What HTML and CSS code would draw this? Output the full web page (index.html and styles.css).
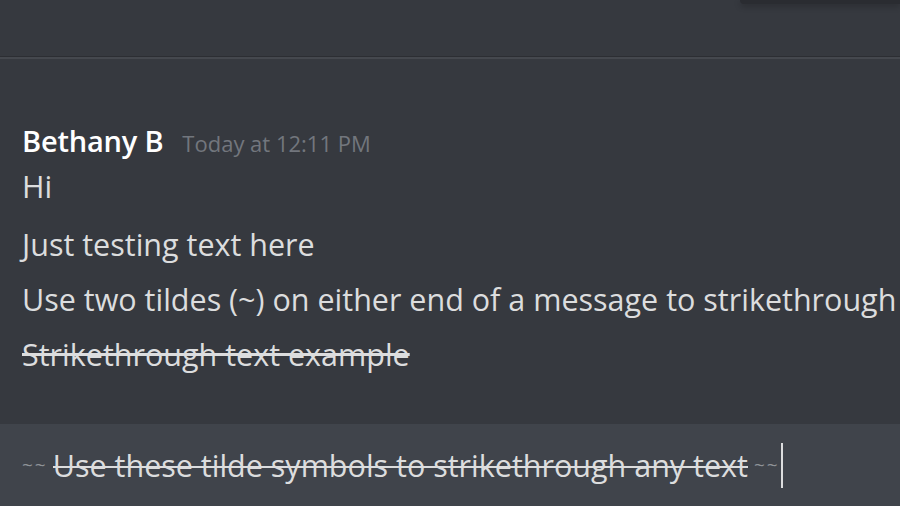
FILE: index.html
```html
<!DOCTYPE html>
<html lang="en">
<head>
    <meta charset="UTF-8">
    <meta name="viewport" content="width=device-width, initial-scale=1.0">
    <title>Chat</title>
    <link rel="stylesheet" href="styles.css">
</head>
<body>
    <div class="topbar">
        <div class="popup"></div>
    </div>
    <div class="divider"></div>

    <div class="messages">
        <div class="message">
            <div class="header">
                <span class="username">Bethany B</span>
                <span class="timestamp">Today at 12:11 PM</span>
            </div>
            <div class="line first">Hi</div>
            <div class="line">Just testing text here</div>
            <div class="line">Use two tildes (~) on either end of a message to strikethrough</div>
            <div class="line"><s>Strikethrough text example</s></div>
        </div>
    </div>

    <div class="composer">
        <span class="tilde">~~</span><s class="draft">Use these tilde symbols to strikethrough any text</s><span class="tilde end">~~</span><span class="caret"></span>
    </div>
</body>
</html>
```

FILE: styles.css
```css
body {
    margin: 0;
    height: 506px;
    overflow: hidden;
    background-color: #36393f;
    font-family: "Open Sans", "Noto Sans", sans-serif;
    color: #dcddde;
    display: flex;
    flex-direction: column;
}

.topbar {
    height: 56px;
    display: flex;
    justify-content: flex-end;
    align-items: flex-start;
}

.popup {
    width: 160px;
    height: 4px;
    background-color: #2a2c31;
    border-bottom-left-radius: 4px;
    box-shadow: 0 2px 6px rgba(0, 0, 0, 0.3);
}

.divider {
    height: 2px;
    border-top: 1px solid #2c2e33;
    background-color: #45484e;
}

.messages {
    flex: 1;
    padding: 62px 22px 0;
}

.header {
    display: flex;
    align-items: baseline;
    gap: 19px;
    height: 44px;
}

.username {
    font-size: 29px;
    font-weight: 600;
    letter-spacing: -0.2px;
    color: #ffffff;
}

.timestamp {
    font-size: 22px;
    color: #72767d;
}

.line {
    font-size: 30.5px;
    line-height: 55px;
    white-space: nowrap;
}

.line.first {
    line-height: 42px;
    margin-bottom: 10px;
}

.composer {
    height: 82px;
    background-color: #40444b;
    display: flex;
    align-items: center;
    padding: 0 22px;
    font-size: 30.5px;
    white-space: nowrap;
}

.draft {
    color: #dcddde;
    text-decoration: none;
    background-image: linear-gradient(#dcddde, #dcddde);
    background-size: 100% 2px;
    background-position: 0 55%;
    background-repeat: no-repeat;
}

.tilde {
    font-size: 19px;
    letter-spacing: 2px;
    color: #8e9297;
    padding-right: 5px;
}

.tilde.end {
    padding: 0 1px 0 6px;
}

.caret {
    width: 2px;
    height: 45px;
    background-color: #dcddde;
}
```
